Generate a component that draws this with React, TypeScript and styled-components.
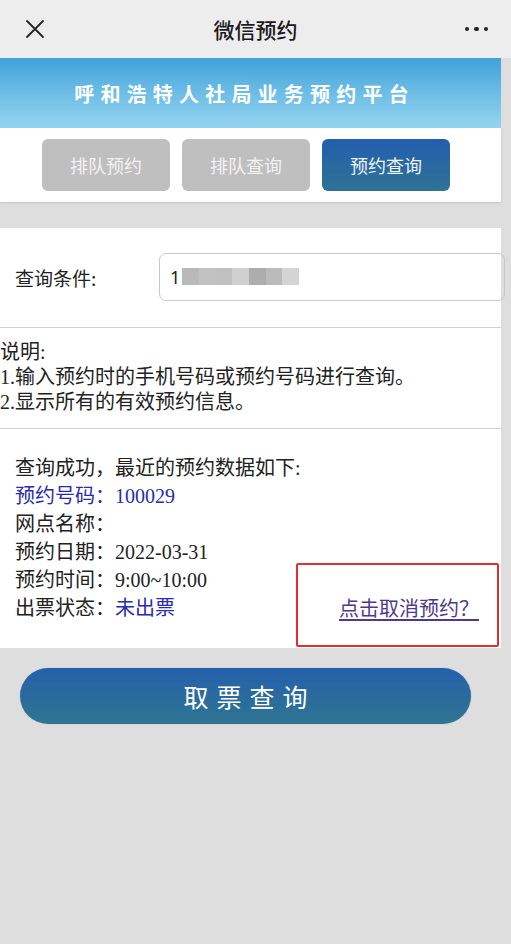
import React from "react";
import styled, { createGlobalStyle } from "styled-components";

const GlobalStyle = createGlobalStyle`
  html, body {
    margin: 0;
    padding: 0;
    background: #dedede;
  }
  body {
    font-family: "Noto Sans CJK SC", "Noto Sans", sans-serif;
    color: #222;
  }
  * { box-sizing: border-box; }
`;

const Page = styled.div`
  width: 511px;
  min-height: 944px;
  background: #dedede;
`;

const NavBar = styled.div`
  height: 58px;
  background: #ededed;
  display: grid;
  grid-template-columns: 80px 1fr 80px;
  align-items: center;
`;

const NavLeft = styled.div`
  display: flex;
  align-items: center;
  padding-left: 25px;
`;

const NavRight = styled.div`
  display: flex;
  justify-content: flex-end;
  align-items: center;
  padding-right: 23px;
  gap: 5px;
`;

const Dot = styled.span`
  width: 4.5px;
  height: 4.5px;
  border-radius: 50%;
  background: #222;
`;

const NavTitle = styled.div`
  text-align: center;
  font-size: 21px;
  font-weight: 500;
  color: #1a1a1a;
  line-height: 58px;
`;

const Content = styled.div`
  width: 501px;
`;

const Banner = styled.div`
  height: 70px;
  background: linear-gradient(180deg, #41a1d9 0%, #6dbde6 50%, #95d4f0 100%);
  display: flex;
  align-items: center;
  justify-content: center;
  color: #ffffff;
  font-size: 20px;
  font-weight: 700;
  letter-spacing: 6.2px;
  padding-right: 12px;
`;

const TabBar = styled.div`
  height: 74px;
  background: #ffffff;
  display: flex;
  align-items: center;
  gap: 12px;
  padding-left: 42px;
  box-shadow: 0 1px 2px rgba(0, 0, 0, 0.12);
`;

const Tab = styled.div<{ $active?: boolean }>`
  width: 128px;
  height: 52px;
  border-radius: 6px;
  display: flex;
  align-items: center;
  justify-content: center;
  font-size: 18px;
  color: ${(p) => (p.$active ? "#eef3f8" : "#f2f2f2")};
  background: ${(p) =>
    p.$active ? "linear-gradient(180deg, #235eaf 0%, #2f7394 100%)" : "#bfbfbf"};
`;

const Card = styled.div`
  margin-top: 26px;
  background: #ffffff;
`;

const QueryRow = styled.div`
  height: 100px;
  display: flex;
  align-items: center;
  border-bottom: 1px solid #d2d2d2;
`;

const QueryLabel = styled.div`
  width: 159px;
  flex-shrink: 0;
  padding-left: 15px;
  font-size: 19px;
  color: #222;
`;

const InputBox = styled.div`
  width: 346px;
  height: 48px;
  flex-shrink: 0;
  border: 1px solid #c8c8c8;
  border-radius: 7px;
  display: flex;
  align-items: center;
  padding-left: 10px;
  font-size: 18px;
  color: #222;
  font-family: "Noto Sans", sans-serif;
  margin-top: -2px;
`;

const BlurBlock = styled.span<{ $shade: string }>`
  display: inline-block;
  width: 16.7px;
  height: 17px;
  background: ${(p) => p.$shade};
`;

const BlurWrap = styled.span`
  display: inline-flex;
  margin-left: 2px;
`;

const Notes = styled.div`
  padding: 12px 0 13px 0;
  border-bottom: 1px solid #d2d2d2;
  font-family: "Liberation Serif", "Noto Sans CJK SC", serif;
  font-size: 20px;
  line-height: 25px;
  color: #222;
`;

const Result = styled.div`
  position: relative;
  padding: 25px 0 26px 15px;
  font-family: "Liberation Serif", "Noto Sans CJK SC", serif;
  font-size: 20px;
  line-height: 28px;
  color: #222;
`;

const Line = styled.div<{ $color?: string }>`
  height: 28px;
  color: ${(p) => p.$color || "#222"};
  white-space: nowrap;
`;

const LastLine = styled.div`
  height: 28px;
  display: flex;
  justify-content: space-between;
  padding-right: 22px;
  white-space: nowrap;
`;

const Blue = styled.span`
  color: #2a2ab3;
`;

const CancelLink = styled.a`
  color: #4e3a8c;
  text-decoration: underline;
  text-underline-offset: 3px;
  font-family: "Noto Sans CJK SC", sans-serif;
  cursor: pointer;
`;

const Annotation = styled.div`
  position: absolute;
  left: 296px;
  top: 134px;
  width: 203px;
  height: 84px;
  border: 2px solid #e4302c;
  border-radius: 2px;
  pointer-events: none;
`;

const ButtonRow = styled.div`
  padding: 20px 0 0 20px;
`;

const BigButton = styled.div`
  width: 451px;
  height: 56px;
  border-radius: 28px;
  background: linear-gradient(180deg, #2560ac 0%, #2f7591 100%);
  display: flex;
  align-items: center;
  justify-content: center;
  color: #ffffff;
  font-size: 25px;
  letter-spacing: 8px;
  padding-left: 8px;
  box-shadow: 0 0 1px rgba(60, 140, 170, 0.6);
`;

const CloseIcon = () => (
  <svg width="20" height="20" viewBox="0 0 20 20">
    <path d="M2 2 L18 18 M18 2 L2 18" stroke="#222" strokeWidth="1.8" strokeLinecap="round" />
  </svg>
);

const shades = ["#b9b9b9", "#c2c2c2", "#c0c0c0", "#cfcfcf", "#adadad", "#bababa", "#d4d4d4"];

export default function App() {
  return (
    <Page>
      <GlobalStyle />
      <NavBar>
        <NavLeft>
          <CloseIcon />
        </NavLeft>
        <NavTitle>微信预约</NavTitle>
        <NavRight>
          <Dot />
          <Dot />
          <Dot />
        </NavRight>
      </NavBar>
      <Content>
        <Banner>呼和浩特人社局业务预约平台</Banner>
        <TabBar>
          <Tab>排队预约</Tab>
          <Tab>排队查询</Tab>
          <Tab $active>预约查询</Tab>
        </TabBar>
        <Card>
          <QueryRow>
            <QueryLabel>查询条件:</QueryLabel>
            <InputBox>
              1
              <BlurWrap>
                {shades.map((s, i) => (
                  <BlurBlock key={i} $shade={s} />
                ))}
              </BlurWrap>
            </InputBox>
          </QueryRow>
          <Notes>
            <div>说明:</div>
            <div>1.输入预约时的手机号码或预约号码进行查询。</div>
            <div>2.显示所有的有效预约信息。</div>
          </Notes>
          <Result>
            <Line>查询成功，最近的预约数据如下:</Line>
            <Line $color="#2a2ab3">预约号码：100029</Line>
            <Line>网点名称：</Line>
            <Line>预约日期：2022-03-31</Line>
            <Line>预约时间：9:00~10:00</Line>
            <LastLine>
              <span>
                出票状态：<Blue>未出票</Blue>
              </span>
              <CancelLink>点击取消预约？</CancelLink>
            </LastLine>
            <Annotation />
          </Result>
        </Card>
        <ButtonRow>
          <BigButton>取票查询</BigButton>
        </ButtonRow>
      </Content>
    </Page>
  );
}
